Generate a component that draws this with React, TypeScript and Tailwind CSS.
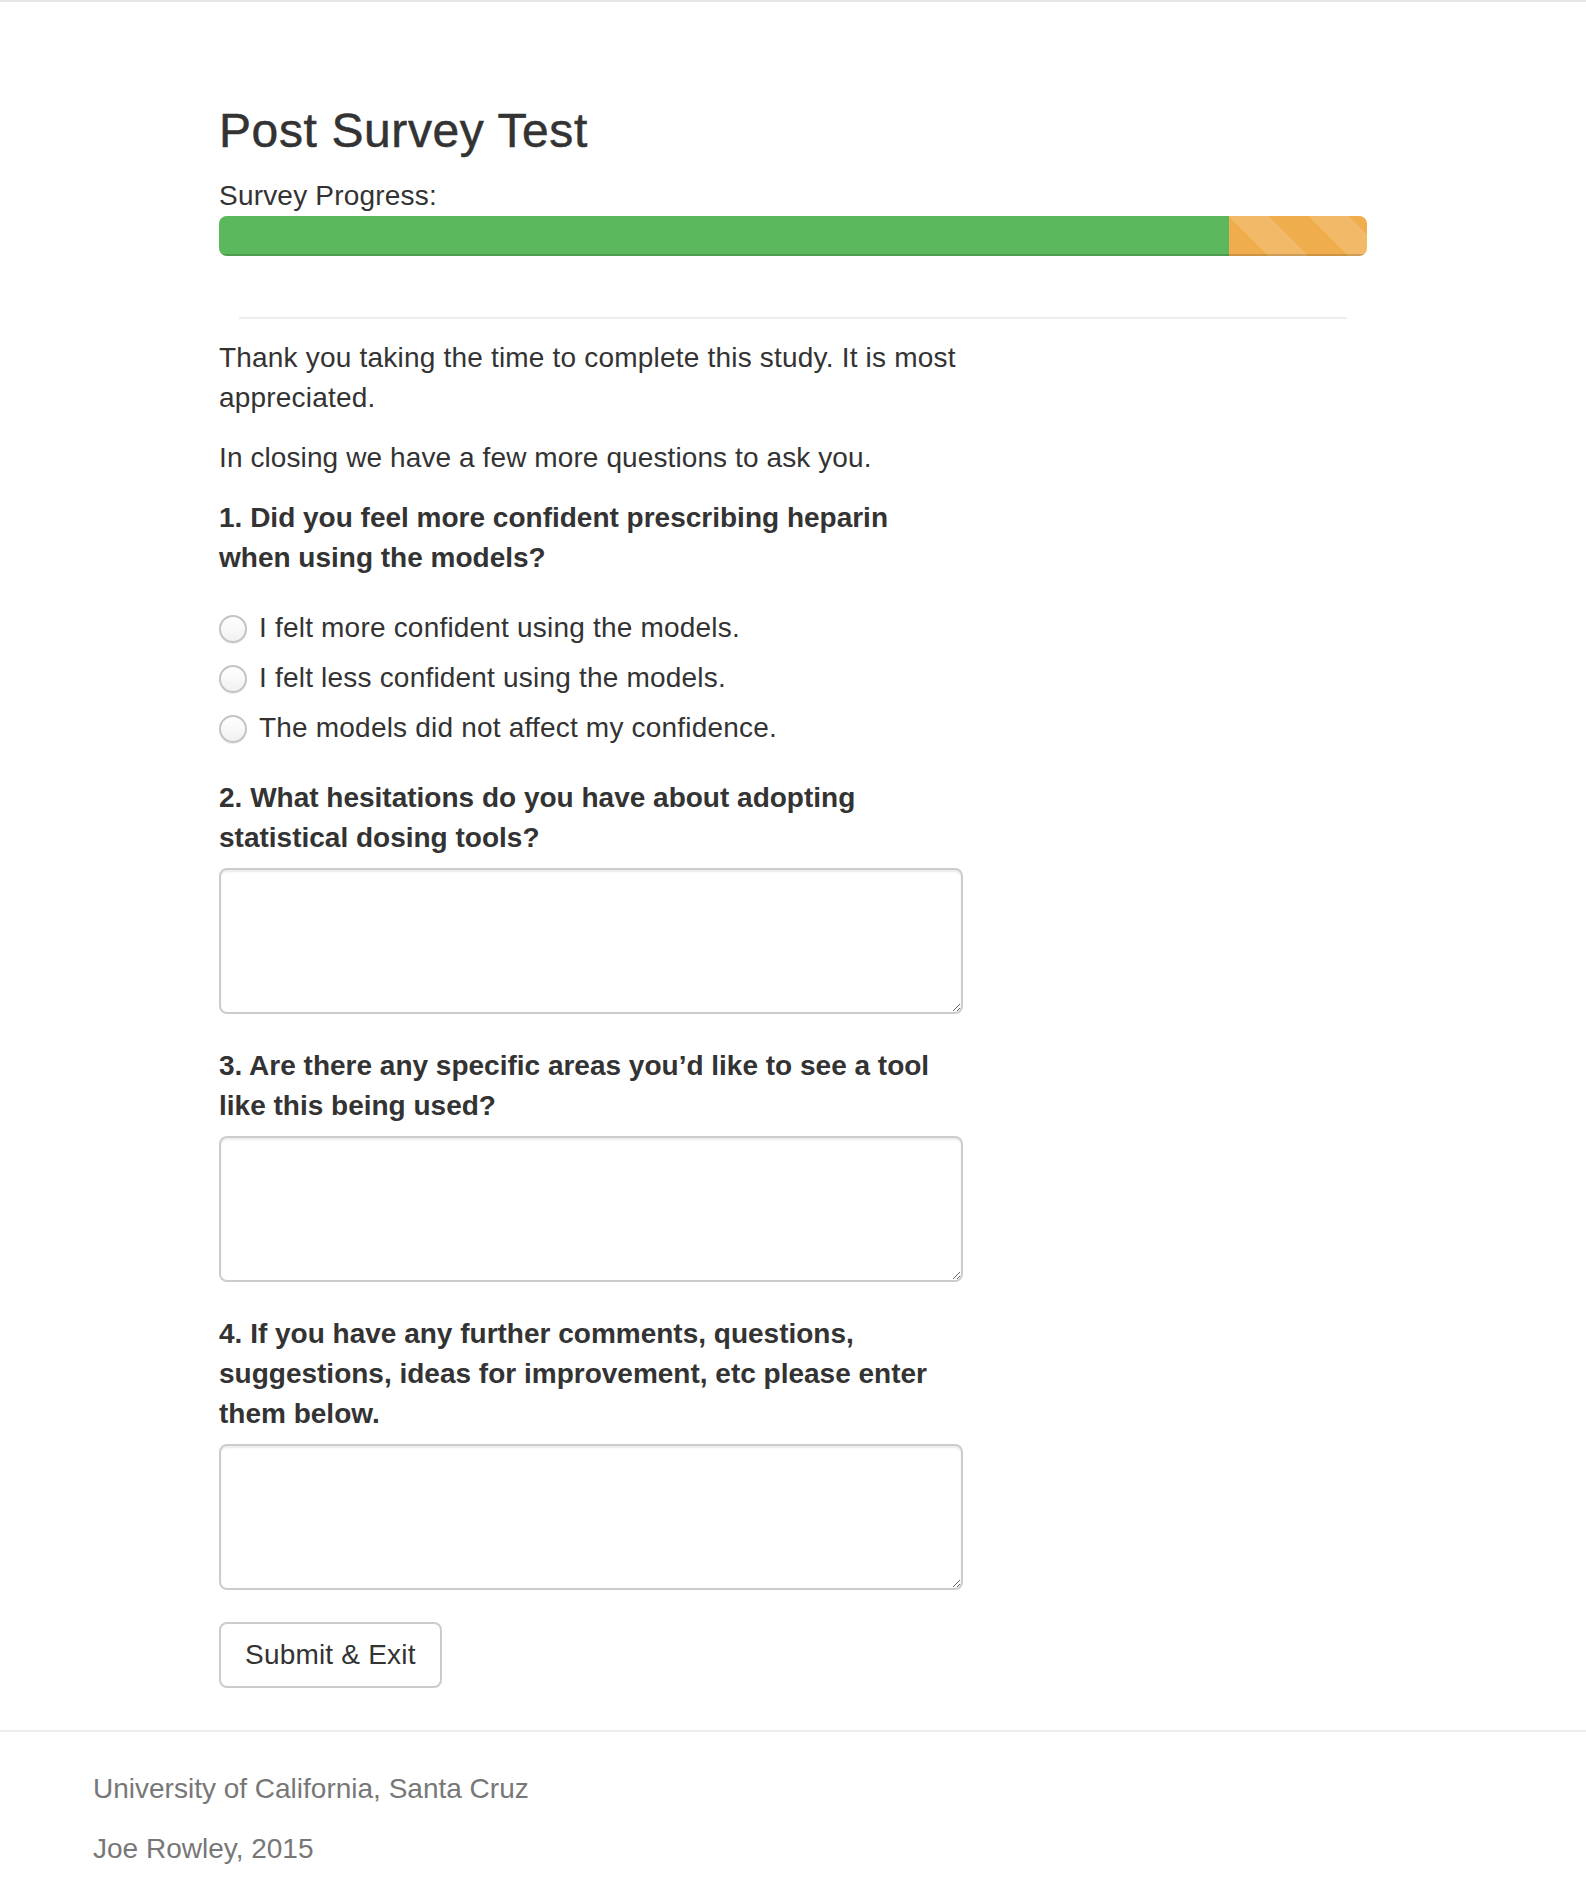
import { useState } from 'react';

const questions = [
  { id: 'hesitations', label: '2. What hesitations do you have about adopting statistical dosing tools?' },
  { id: 'areas', label: '3. Are there any specific areas you\u2019d like to see a tool like this being used?' },
  { id: 'comments', label: '4. If you have any further comments, questions, suggestions, ideas for improvement, etc please enter them below.' },
];

const options = [
  'I felt more confident using the models.',
  'I felt less confident using the models.',
  'The models did not affect my confidence.',
];

export default function App() {
  const [confidence, setConfidence] = useState<string | null>(null);

  return (
    <div className="min-h-screen border-t-2 border-[#e7e7e7] bg-white font-['Liberation_Sans',Arial,sans-serif] text-[28px] leading-[40px] tracking-[0.2px] text-[#333]">
      {/* Main */}
      <div className="mx-auto w-[1148px] pt-[102px]">
        <h1 className="mb-[19px] text-[48px] leading-[53px] font-normal tracking-[0.6px] [-webkit-text-stroke:0.5px_#333]">Post Survey Test</h1>
        <p className="mt-px">Survey Progress:</p>
        <div className="flex h-[40px] overflow-hidden rounded-[8px] bg-[#f5f5f5] shadow-[inset_0_2px_4px_rgba(0,0,0,0.1)]">
          <div className="h-full w-[88%] bg-[#5cb85c] shadow-[inset_0_-2px_0_rgba(0,0,0,0.15)]" />
          <div className="h-full w-[12%] bg-[#f0ad4e] bg-[linear-gradient(45deg,rgba(255,255,255,0.15)_25%,transparent_25%,transparent_50%,rgba(255,255,255,0.15)_50%,rgba(255,255,255,0.15)_75%,transparent_75%,transparent)] bg-size-[80px_80px] shadow-[inset_0_-2px_0_rgba(0,0,0,0.15)]" />
        </div>

        <hr className="mx-[20px] mt-[61px] border-t-2 border-[#eee]" />

        <div className="mt-[19px] w-[750px]">
          <p className="mb-[20px]">Thank you taking the time to complete this study. It is most appreciated.</p>
          <p className="mb-[20px] tracking-[0.1px]">In closing we have a few more questions to ask you.</p>

          {/* Question 1 */}
          <p className="mb-[30px] max-w-[740px] font-bold tracking-normal">1. Did you feel more confident prescribing heparin when using the models?</p>
          <div className="mb-[30px] flex flex-col gap-[10px]">
            {options.map((opt) => (
              <label key={opt} className="flex cursor-pointer items-center gap-[12px]">
                <input
                  type="radio"
                  name="confidence"
                  checked={confidence === opt}
                  onChange={() => setConfidence(opt)}
                  className="m-0 h-[28px] w-[28px] shrink-0 appearance-none rounded-full border-2 border-[#c4c4c4] bg-[linear-gradient(#ffffff,#f1f1f1)] shadow-[0_1px_1px_rgba(0,0,0,0.08)] checked:border-[#3b8de0] checked:bg-[radial-gradient(circle,#ffffff_24%,#3b8de0_28%)] translate-y-[1px]"
                />
                <span>{opt}</span>
              </label>
            ))}
          </div>

          {questions.map((q) => (
            <div key={q.id} className="mb-[32px]">
              <p className="mb-[10px] max-w-[740px] font-bold tracking-normal">{q.label}</p>
              <textarea
                className="block h-[146px] w-[744px] rounded-[8px] border-2 border-[#ccc] bg-white px-[24px] py-[12px] text-[28px] shadow-[inset_0_2px_2px_rgba(0,0,0,0.075)] outline-none"
              />
            </div>
          ))}

          <button className="rounded-[8px] border-2 border-[#ccc] bg-white px-[24px] py-[11px] text-[28px] leading-[40px] text-[#333]">
            Submit &amp; Exit
          </button>
        </div>
      </div>

      {/* Footer */}
      <footer className="mt-[42px] border-t-2 border-[#eee] px-[93px] pt-[37px] pb-[19px] tracking-normal text-[#777]">
        <p className="mb-[20px]">University of California, Santa Cruz</p>
        <p>Joe Rowley, 2015</p>
      </footer>
    </div>
  );
}
